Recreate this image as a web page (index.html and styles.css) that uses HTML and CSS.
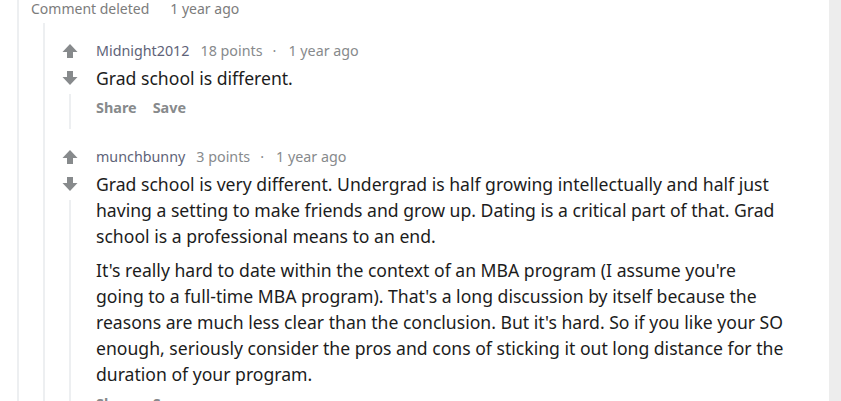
FILE: index.html
```html
<!DOCTYPE html>
<html>
<head>
<meta charset="utf-8">
<link rel="stylesheet" href="styles.css">
</head>
<body>
<div class="page">
  <div class="main">
    <div class="level1">
      <div class="deleted"><span>Comment deleted</span><span class="del-time">1 year ago</span></div>
      <div class="level2">
        <div class="comment">
          <div class="votes">
            <svg class="arrow" viewBox="0 0 16 16"><path d="M8 1 L15.5 9 L11 9 L11 15 L5 15 L5 9 L0.5 9 Z"/></svg>
            <svg class="arrow down" viewBox="0 0 16 16"><path d="M8 15 L15.5 7 L11 7 L11 1 L5 1 L5 7 L0.5 7 Z"/></svg>
            <div class="threadline"></div>
          </div>
          <div class="content">
            <div class="meta"><span class="author">Midnight2012</span><span class="points">18 points</span><span class="dot">·</span><span class="time">1 year ago</span></div>
            <div class="body"><p>Grad school is different.</p></div>
            <div class="actions"><span>Share</span><span>Save</span></div>
          </div>
        </div>
        <div class="comment">
          <div class="votes">
            <svg class="arrow" viewBox="0 0 16 16"><path d="M8 1 L15.5 9 L11 9 L11 15 L5 15 L5 9 L0.5 9 Z"/></svg>
            <svg class="arrow down" viewBox="0 0 16 16"><path d="M8 15 L15.5 7 L11 7 L11 1 L5 1 L5 7 L0.5 7 Z"/></svg>
            <div class="threadline"></div>
          </div>
          <div class="content">
            <div class="meta"><span class="author">munchbunny</span><span class="points">3 points</span><span class="dot">·</span><span class="time">1 year ago</span></div>
            <div class="body">
              <p>Grad school is very different. Undergrad is half growing intellectually and half just having a setting to make friends and grow up. Dating is a critical part of that. Grad school is a professional means to an end.</p>
              <p>It's really hard to date within the context of an MBA program (I assume you're going to a full-time MBA program). That's a long discussion by itself because the reasons are much less clear than the conclusion. But it's hard. So if you like your SO enough, seriously consider the pros and cons of sticking it out long distance for the duration of your program.</p>
            </div>
            <div class="actions"><span>Share</span><span>Save</span></div>
          </div>
        </div>
      </div>
    </div>
  </div>
  <div class="side"></div>
</div>
</body>
</html>
```

FILE: styles.css
```css
html, body {
  margin: 0;
  padding: 0;
  background: #ffffff;
  height: 100%;
  overflow: hidden;
}
.page {
  display: flex;
  height: 401px;
  width: 841px;
}
.main {
  width: 829px;
  background: #ffffff;
  overflow: hidden;
}
.side {
  flex: 1;
  background: #ededed;
}
.level1 {
  margin-left: 17px;
  border-left: 2px solid #edeff1;
  min-height: 401px;
}
.deleted {
  padding-left: 12px;
  font-family: "Noto Sans", sans-serif;
  font-size: 14px;
  line-height: 18px;
  color: #7c7c7c;
  display: flex;
  gap: 21px;
}
.level2 {
  margin-left: 24px;
  margin-top: 5px;
  border-left: 2px solid #edeff1;
  min-height: 420px;
  padding-top: 17px;
}
.comment {
  display: flex;
  padding-left: 13px;
  margin-bottom: 17px;
}
.votes {
  width: 24px;
  display: flex;
  flex-direction: column;
  align-items: center;
  flex-shrink: 0;
}
.arrow {
  width: 16px;
  height: 16px;
  fill: #878a8c;
  margin-top: 3px;
}
.arrow.down {
  margin-top: 11px;
}
.threadline {
  flex: 1;
  width: 2px;
  background: #edeff1;
  margin-top: 8px;
}
.content {
  padding-left: 14px;
  padding-bottom: 13px;
  flex: 1;
}
.meta {
  font-family: "Noto Sans", sans-serif;
  font-size: 14.3px;
  line-height: 18px;
  color: #878a8c;
  display: flex;
  margin-top: 2px;
}
.author {
  color: #5e6378;
  margin-right: 11px;
}
.dot {
  margin: 0 12px 0 10px;
}
.body {
  font-family: "Noto Sans", sans-serif;
  font-size: 17.6px;
  line-height: 26px;
  color: #1c1c1c;
  margin-top: 5px;
  padding-right: 44px;
}
.body p {
  margin: 0 0 8px 0;
}
.actions {
  font-family: "Noto Sans", sans-serif;
  font-size: 14.4px;
  font-weight: bold;
  line-height: 16px;
  color: #878a8c;
  display: flex;
  gap: 16px;
  padding-top: 1px;
}
```
